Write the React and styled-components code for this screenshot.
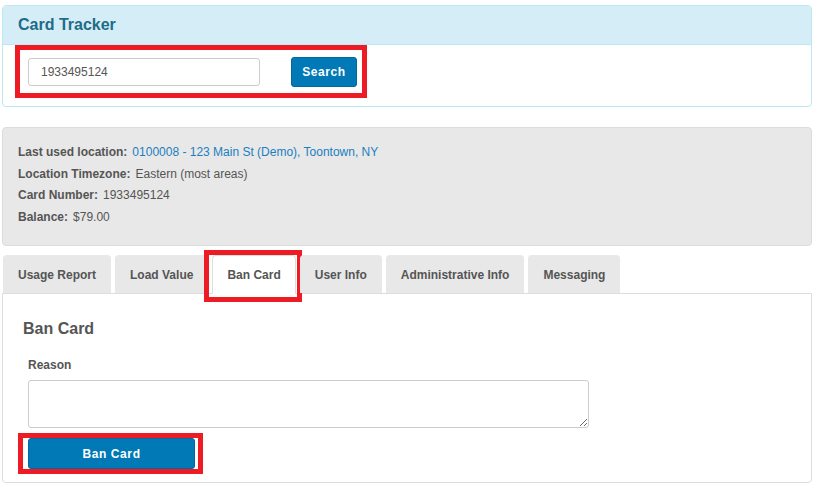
import React, {useState} from 'react';
import styled, {createGlobalStyle} from 'styled-components';

const tabs = ['Usage Report', 'Load Value', 'Ban Card', 'User Info', 'Administrative Info', 'Messaging'];

function App() {
  const [cardNo, setCardNo] = useState('1933495124');
  const [reason, setReason] = useState('');
  const [active, setActive] = useState('Ban Card');

  return (
    <Page>
      <GlobalStyle />
      <TrackerPanel>
        <TrackerHeader>Card Tracker</TrackerHeader>
        <TrackerBody>
          <SearchForm onSubmit={(e) => e.preventDefault()}>
            <SearchInput value={cardNo} onChange={(e) => setCardNo(e.target.value)} />
            <PrimaryButton type="submit" $w={66} $h={30}>Search</PrimaryButton>
          </SearchForm>
        </TrackerBody>
      </TrackerPanel>

      <InfoPanel>
        <InfoRow><b>Last used location:</b><Link href="#">0100008 - 123 Main St (Demo), Toontown, NY</Link></InfoRow>
        <InfoRow><b>Location Timezone:</b>Eastern (most areas)</InfoRow>
        <InfoRow><b>Card Number:</b>1933495124</InfoRow>
        <InfoRow><b>Balance:</b>$79.00</InfoRow>
      </InfoPanel>

      <TabBar>
        {tabs.map((t) => (
          <Tab key={t} $active={active === t} onClick={() => setActive(t)}>
            {t}
            {active === t && <Marker />}
          </Tab>
        ))}
      </TabBar>
      <TabContent>
        <Heading>Ban Card</Heading>
        <FormGroup>
          <Label htmlFor="reason">Reason</Label>
          <Reason id="reason" value={reason} onChange={(e) => setReason(e.target.value)} />
        </FormGroup>
        <ButtonMark>
          <PrimaryButton type="button" $w={167} $h={31}>Ban Card</PrimaryButton>
        </ButtonMark>
      </TabContent>
    </Page>
  );
}

const GlobalStyle = createGlobalStyle`
  body{
    margin: 0;
    background: #fff;
    font-family: "Liberation Sans", Arial, sans-serif;
    font-size: 12px;
    color: #555;
  }
`

const Page = styled.div`
  padding: 5px 5px 0 2px;
`

const TrackerPanel = styled.section`
  border: 1px solid #bce8f1;
  border-radius: 4px;
  background: #fff;
`

const TrackerHeader = styled.h1`
  margin: 0;
  height: 38px;
  padding-left: 15px;
  display: flex;
  align-items: center;
  background: #d5edf7;
  border-bottom: 1px solid #bce8f1;
  border-radius: 3px 3px 0 0;
  font-size: 16px;
  font-weight: bold;
  color: #1d6c88;
`

const TrackerBody = styled.div`
  padding: 0 0 8px 12px;
`

const SearchForm = styled.form`
  display: inline-flex;
  align-items: center;
  gap: 31px;
  height: 43px;
  padding: 0 5px 0 8px;
  border: 5px solid #ed1c24;
`

const SearchInput = styled.input`
  box-sizing: border-box;
  width: 232px;
  height: 28px;
  padding: 0 12px;
  border: 1px solid #ccc;
  border-radius: 3px;
  font-family: inherit;
  font-size: 12px;
  color: #555;
  outline: none;
`

const PrimaryButton = styled.button`
  box-sizing: border-box;
  width: ${(p) => p.$w}px;
  height: ${(p) => p.$h}px;
  border: 1px solid #006a9e;
  border-radius: 3px;
  background: #0079b6;
  color: #fff;
  font-family: inherit;
  font-size: 12px;
  font-weight: bold;
  letter-spacing: 0.6px;
  cursor: pointer;
`

const InfoPanel = styled.section`
  margin-top: 20px;
  padding: 14px 15px 17px;
  background: #e8e8e8;
  border: 1px solid #dcdcdc;
  border-radius: 4px;
`

const InfoRow = styled.div`
  line-height: 21.5px;
  color: #555;
  b{
    margin-right: 5px;
  }
`

const Link = styled.a`
  color: #1a7fc0;
  text-decoration: none;
`

const TabBar = styled.div`
  display: flex;
  gap: 4px;
  margin-top: 9px;
  padding-left: 1px;
  position: relative;
  z-index: 1;
`

const Tab = styled.div`
  position: relative;
  box-sizing: border-box;
  height: ${(p) => (p.$active ? 39 : 38)}px;
  margin-bottom: ${(p) => (p.$active ? -1 : 0)}px;
  padding: 0 14px;
  display: flex;
  align-items: center;
  border: 1px solid ${(p) => (p.$active ? '#ddd' : '#e8e8e8')};
  border-bottom: none;
  border-radius: 4px 4px 0 0;
  background: ${(p) => (p.$active ? '#fff' : '#e8e8e8')};
  font-weight: bold;
  color: #555;
  cursor: pointer;
`

const Marker = styled.span`
  position: absolute;
  top: -6px;
  left: -9px;
  right: -7px;
  bottom: -8px;
  border: 5px solid #ed1c24;
  pointer-events: none;
`

const TabContent = styled.section`
  padding: 26px 15px 9px;
  border: 1px solid #ddd;
  border-radius: 0 0 4px 4px;
  height: 153px;
`

const Heading = styled.h2`
  margin: 0 0 19px 5px;
  font-size: 16px;
  line-height: 18px;
  font-weight: bold;
  color: #555;
`

const FormGroup = styled.div`
  display: flex;
  flex-direction: column;
  align-items: flex-start;
  padding-left: 10px;
  margin-bottom: 5px;
`

const Label = styled.label`
  font-weight: bold;
  line-height: 17px;
  margin-bottom: 6px;
`

const Reason = styled.textarea`
  box-sizing: border-box;
  width: 561px;
  height: 48px;
  display: block;
  border: 1px solid #ccc;
  border-radius: 3px;
  font-family: inherit;
  outline: none;
`

const ButtonMark = styled.div`
  display: inline-flex;
  padding: 0 3px 0 5px;
  border: 5px solid #ed1c24;
`

export default App
